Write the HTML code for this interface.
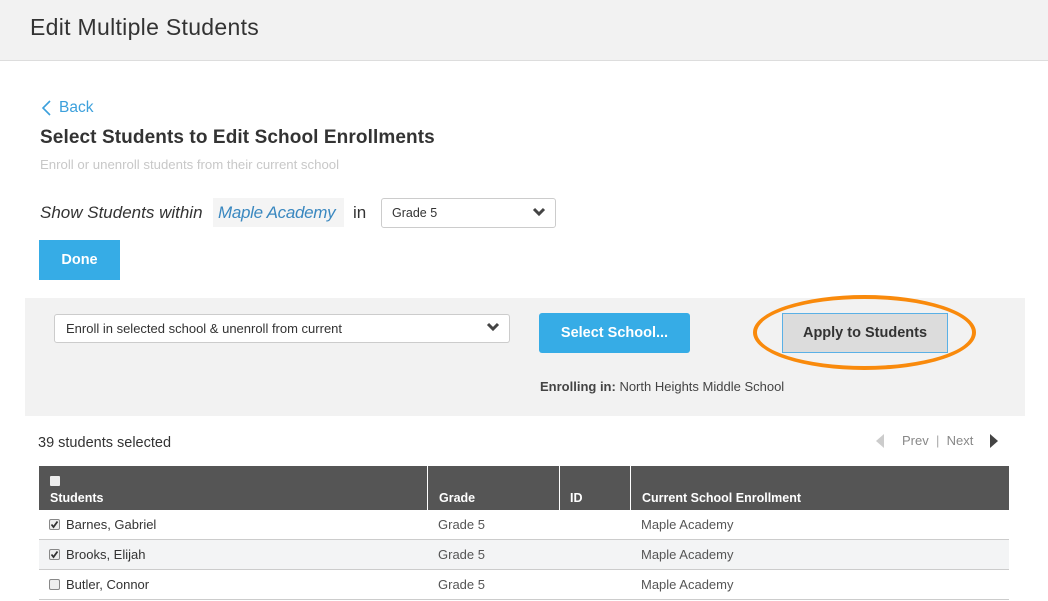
<!DOCTYPE html>
<html><head><style>
*{margin:0;padding:0;box-sizing:border-box}
body{width:1048px;height:601px;overflow:hidden;background:#fff;font-family:"Liberation Sans",sans-serif;color:#333;position:relative}
.a{position:absolute;white-space:nowrap}
.cb{position:absolute;width:11px;height:11px;border:1px solid #888;border-radius:2px;background:#eee}
</style></head><body>
<div class="a" style="left:0;top:0;width:1048px;height:61px;background:#f2f2f2;border-bottom:1px solid #ddd"></div>
<div class="a" style="left:30px;top:14px;font-size:23px;color:#333;letter-spacing:0.3px">Edit Multiple Students</div>

<svg class="a" style="left:41px;top:100px" width="12" height="16"><path d="M9 1 L2 8 L9 15" fill="none" stroke="#3ca0dc" stroke-width="1.6"/></svg>
<div class="a" style="left:59px;top:99px;font-size:15.5px;color:#3ca0dc">Back</div>
<div class="a" style="left:40px;top:127px;font-size:19px;font-weight:bold;color:#333;letter-spacing:0.1px">Select Students to Edit School Enrollments</div>
<div class="a" style="left:40px;top:157px;font-size:13.2px;color:#c8c8c8">Enroll or unenroll students from their current school</div>

<div class="a" style="left:40px;top:203px;font-size:17px;font-style:italic;color:#333">Show Students within</div>
<div class="a" style="left:213px;top:198px;width:131px;height:29px;background:#f4f4f4"></div>
<div class="a" style="left:218px;top:203px;font-size:17px;font-style:italic;color:#3a88c0;letter-spacing:-0.3px">Maple Academy</div>
<div class="a" style="left:353px;top:203px;font-size:17px;color:#333">in</div>
<div class="a" style="left:381px;top:198px;width:175px;height:30px;border:1px solid #ccc;border-radius:3px;background:#fff"></div>
<div class="a" style="left:392px;top:206px;font-size:12.5px;color:#333">Grade 5</div>
<svg class="a" style="left:532px;top:207px" width="14" height="10"><path d="M2 2 L7 7 L12 2" fill="none" stroke="#444" stroke-width="3"/></svg>

<div class="a" style="left:39px;top:240px;width:81px;height:40px;background:#36ace6"></div>
<div class="a" style="left:39px;top:252px;width:81px;text-align:center;font-size:14.5px;font-weight:bold;color:#fff">Done</div>

<div class="a" style="left:25px;top:298px;width:1000px;height:118px;background:#f2f2f2"></div>
<div class="a" style="left:54px;top:314px;width:456px;height:29px;border:1px solid #ccc;border-radius:3px;background:#fff"></div>
<div class="a" style="left:66px;top:321px;font-size:13px;color:#333">Enroll in selected school &amp; unenroll from current</div>
<svg class="a" style="left:486px;top:322px" width="14" height="10"><path d="M2 2 L7 7 L12 2" fill="none" stroke="#444" stroke-width="3"/></svg>
<div class="a" style="left:539px;top:313px;width:151px;height:40px;background:#36ace6;border-radius:3px"></div>
<div class="a" style="left:539px;top:325px;width:151px;text-align:center;font-size:14.5px;font-weight:bold;color:#fff">Select School...</div>
<div class="a" style="left:782px;top:313px;width:166px;height:40px;background:#dcdcdc;border:1px solid #5ab0e6"></div>
<div class="a" style="left:782px;top:325px;width:166px;text-align:center;font-size:14.5px;font-weight:bold;color:#333">Apply to Students</div>
<div class="a" style="left:753px;top:295px;width:223px;height:75px;border:4px solid #f98a0c;border-radius:50%"></div>
<div class="a" style="left:540px;top:379px;font-size:13px;color:#444"><b>Enrolling in:</b> North Heights Middle School</div>

<div class="a" style="left:38px;top:435px;font-size:14.5px;color:#333">39 students selected</div>
<svg class="a" style="left:874px;top:433px" width="12" height="16"><path d="M10 1 L2 8 L10 15Z" fill="#ccc"/></svg>
<div class="a" style="left:902px;top:433px;font-size:13px;color:#888">Prev&nbsp;&nbsp;<span style="color:#aaa">|</span>&nbsp;&nbsp;Next</div>
<svg class="a" style="left:988px;top:433px" width="12" height="16"><path d="M2 1 L10 8 L2 15Z" fill="#444"/></svg>

<div class="a" style="left:39px;top:466px;width:970px;height:44px;background:#555"></div>
<div class="a" style="left:427px;top:466px;width:1px;height:44px;background:#fff"></div>
<div class="a" style="left:559px;top:466px;width:1px;height:44px;background:#fff"></div>
<div class="a" style="left:630px;top:466px;width:1px;height:44px;background:#fff"></div>
<div class="a" style="left:50px;top:476px;width:10px;height:10px;background:#eee;border-radius:1px"></div>
<div class="a" style="left:50px;top:491px;font-size:12.5px;font-weight:bold;color:#fff">Students</div>
<div class="a" style="left:439px;top:491px;font-size:12.5px;font-weight:bold;color:#fff">Grade</div>
<div class="a" style="left:570px;top:491px;font-size:12.5px;font-weight:bold;color:#fff">ID</div>
<div class="a" style="left:642px;top:491px;font-size:12.5px;font-weight:bold;color:#fff">Current School Enrollment</div>

<div class="a" style="left:39px;top:510px;width:970px;height:30px;border-bottom:1px solid #ccc"></div>
<div class="a" style="left:39px;top:540px;width:970px;height:30px;background:#f3f4f5;border-bottom:1px solid #ccc"></div>
<div class="a" style="left:39px;top:570px;width:970px;height:30px;border-bottom:1px solid #ccc"></div>

<div class="cb" style="left:49px;top:519px"></div><svg class="a" style="left:49px;top:519px" width="11" height="11"><path d="M2.5 5.5 L4.5 8 L8.5 2.5" fill="none" stroke="#333" stroke-width="1.8"/></svg>
<div class="cb" style="left:49px;top:549px"></div><svg class="a" style="left:49px;top:549px" width="11" height="11"><path d="M2.5 5.5 L4.5 8 L8.5 2.5" fill="none" stroke="#333" stroke-width="1.8"/></svg>
<div class="cb" style="left:49px;top:579px"></div>
<div class="a" style="left:66px;top:517px;font-size:13px">Barnes, Gabriel</div>
<div class="a" style="left:66px;top:547px;font-size:13px">Brooks, Elijah</div>
<div class="a" style="left:66px;top:577px;font-size:13px">Butler, Connor</div>
<div class="a" style="left:438px;top:517px;font-size:13px;color:#555">Grade 5</div>
<div class="a" style="left:438px;top:547px;font-size:13px;color:#555">Grade 5</div>
<div class="a" style="left:438px;top:577px;font-size:13px;color:#555">Grade 5</div>
<div class="a" style="left:641px;top:517px;font-size:13px;color:#555">Maple Academy</div>
<div class="a" style="left:641px;top:547px;font-size:13px;color:#555">Maple Academy</div>
<div class="a" style="left:641px;top:577px;font-size:13px;color:#555">Maple Academy</div>
</body></html>
